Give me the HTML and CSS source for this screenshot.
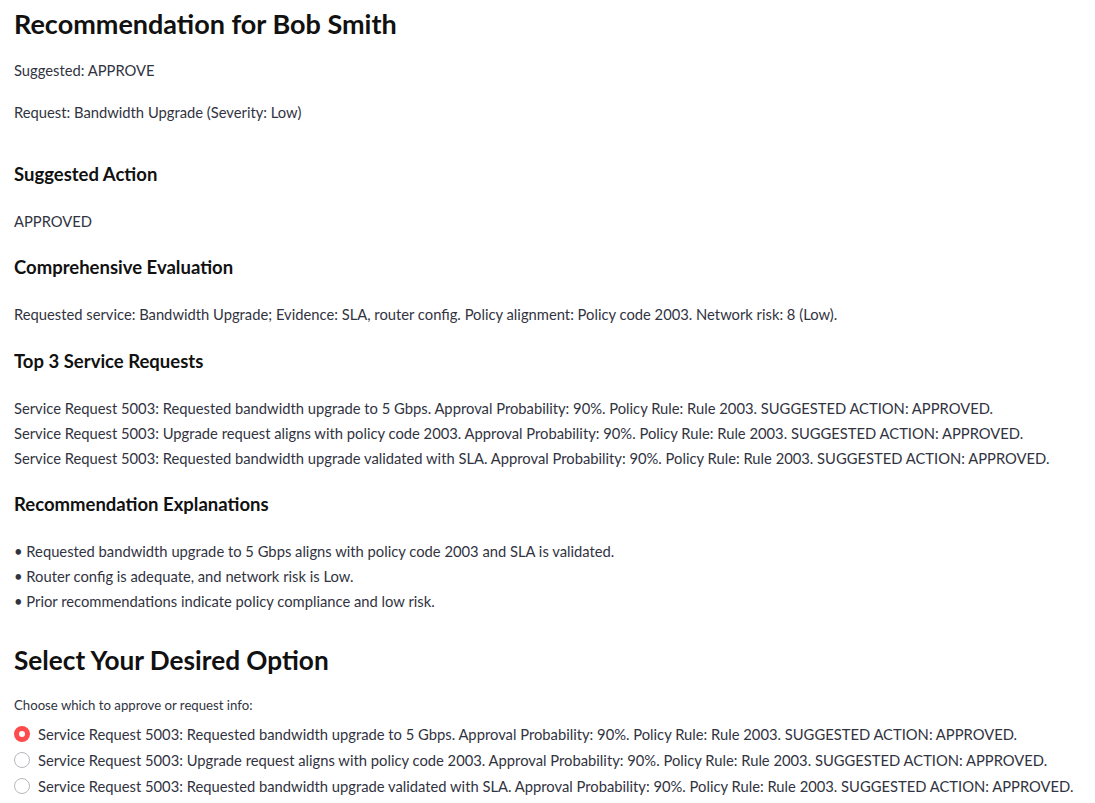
FILE: index.html
```html
<!DOCTYPE html>
<html lang="en">
<head>
<meta charset="utf-8">
<title>Recommendation</title>
<link rel="stylesheet" href="styles.css">
</head>
<body>
<main class="page">
  <h1 class="title">Recommendation for Bob Smith</h1>
  <p class="meta">Suggested: APPROVE</p>
  <p class="meta">Request: Bandwidth Upgrade (Severity: Low)</p>

  <h3 class="section first">Suggested Action</h3>
  <p class="text">APPROVED</p>

  <h3 class="section">Comprehensive Evaluation</h3>
  <p class="text">Requested service: Bandwidth Upgrade; Evidence: SLA, router config. Policy alignment: Policy code 2003. Network risk: 8 (Low).</p>

  <h3 class="section">Top 3 Service Requests</h3>
  <div class="lines">
    <p class="line">Service Request 5003: Requested bandwidth upgrade to 5 Gbps. Approval Probability: 90%. Policy Rule: Rule 2003. SUGGESTED ACTION: APPROVED.</p>
    <p class="line">Service Request 5003: Upgrade request aligns with policy code 2003. Approval Probability: 90%. Policy Rule: Rule 2003. SUGGESTED ACTION: APPROVED.</p>
    <p class="line">Service Request 5003: Requested bandwidth upgrade validated with SLA. Approval Probability: 90%. Policy Rule: Rule 2003. SUGGESTED ACTION: APPROVED.</p>
  </div>

  <h3 class="section">Recommendation Explanations</h3>
  <div class="lines">
    <p class="line">• Requested bandwidth upgrade to 5 Gbps aligns with policy code 2003 and SLA is validated.</p>
    <p class="line">• Router config is adequate, and network risk is Low.</p>
    <p class="line">• Prior recommendations indicate policy compliance and low risk.</p>
  </div>

  <h2 class="title select-title">Select Your Desired Option</h2>
  <p class="label">Choose which to approve or request info:</p>
  <div class="radios" role="radiogroup">
    <label class="radio">
      <span class="dot checked"></span>
      <span class="radio-text">Service Request 5003: Requested bandwidth upgrade to 5 Gbps. Approval Probability: 90%. Policy Rule: Rule 2003. SUGGESTED ACTION: APPROVED.</span>
    </label>
    <label class="radio">
      <span class="dot"></span>
      <span class="radio-text">Service Request 5003: Upgrade request aligns with policy code 2003. Approval Probability: 90%. Policy Rule: Rule 2003. SUGGESTED ACTION: APPROVED.</span>
    </label>
    <label class="radio">
      <span class="dot"></span>
      <span class="radio-text">Service Request 5003: Requested bandwidth upgrade validated with SLA. Approval Probability: 90%. Policy Rule: Rule 2003. SUGGESTED ACTION: APPROVED.</span>
    </label>
  </div>
</main>
</body>
</html>
```
FILE: styles.css
```css
html, body {
  margin: 0;
  padding: 0;
  background: #ffffff;
}
body {
  font-family: Lato, "Noto Sans", "Liberation Sans", sans-serif;
  color: #31333f;
}
.page {
  padding: 7px 14px 0 14px;
  display: flex;
  flex-direction: column;
  align-items: flex-start;
}
p { margin: 0; }
.title {
  margin: 0;
  font-size: 27px;
  line-height: 34px;
  font-weight: 700;
  color: #111111;
}
.meta {
  font-size: 14.75px;
  line-height: 25px;
  margin-top: 17px;
}
.section {
  margin: 21.5px 0 22px 0;
  font-size: 18.5px;
  line-height: 25px;
  font-weight: 700;
  color: #111111;
}
.section.first { margin-top: 36.5px; }
.text, .line {
  font-size: 14.75px;
  line-height: 25px;
}
.select-title {
  margin-top: 28.5px;
  font-size: 26.2px;
}
.label {
  margin-top: 18px;
  font-size: 13.2px;
  line-height: 20px;
}
.radios {
  margin-top: 6px;
  display: flex;
  flex-direction: column;
}
.radio {
  display: flex;
  align-items: center;
  gap: 8px;
  height: 26px;
  font-size: 14.75px;
}
.dot {
  width: 16px;
  height: 16px;
  box-sizing: border-box;
  border-radius: 50%;
  border: 1px solid #b7b8bd;
  background: #fff;
  flex: none;
}
.dot.checked {
  border: 5px solid #ff4b4b;
  background: #ffffff;
}
```
